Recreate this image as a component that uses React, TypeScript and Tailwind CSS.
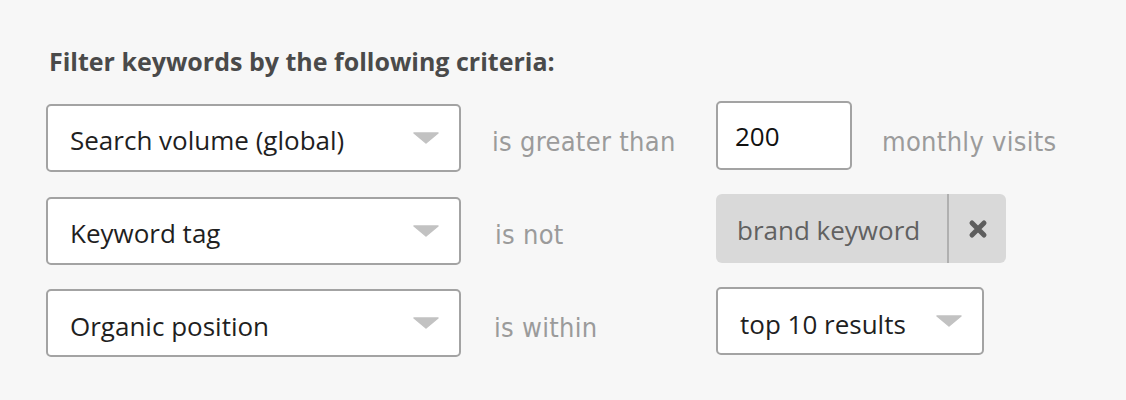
import React from "react";

const sans = { fontFamily: "'Open Sans', Lato, sans-serif" };
const narrow = { fontFamily: "'Liberation Sans Narrow', 'DejaVu Sans Condensed', sans-serif" };

function Caret() {
  return (
    <svg width="26" height="12" viewBox="0 0 26 12" className="shrink-0">
      <path d="M1 1 H25 L13 11 Z" fill="#c2c2c2" stroke="#c2c2c2" strokeLinejoin="round" strokeWidth="1.5" />
    </svg>
  );
}

function Select({ label, w }: { label: string; w: string }) {
  return (
    <div className={`${w} h-[68px] flex items-center justify-between bg-white border-2 border-[#a3a3a3] rounded-[5px] pl-[22px] pr-[20px]`}>
      <span className="text-[26px] text-[#1f1f1f] pt-[6px]" style={sans}>{label}</span>
      <Caret />
    </div>
  );
}

function Label({ text }: { text: string }) {
  return <span className="text-[27px] text-[#9b9b9b] tracking-[0.3px] pt-[10px] inline-block" style={narrow}>{text}</span>;
}

export default function App() {
  return (
    <div className="w-[1126px] h-[400px] bg-[#f7f7f7] pl-[46px] pt-[46px]">
      <h2 className="text-[25px] leading-[30px] font-bold text-[#4a4a4a] pl-[3px] mb-[25px]" style={sans}>
        Filter keywords by the following criteria:
      </h2>

      <div className="grid grid-cols-[415px_255px_auto] gap-y-[20px] items-center">
        {/* row 1 */}
        <Select label="Search volume (global)" w="w-[415px]" />
        <div className="pl-[31px]"><Label text="is greater than" /></div>
        <div className="flex items-center gap-[30px] mb-[4px]">
          <div className="w-[136px] h-[69px] bg-white border-2 border-[#a3a3a3] rounded-[5px] flex items-center pl-[17px]">
            <span className="text-[26px] text-[#111] pt-[2px]" style={sans}>200</span>
          </div>
          <div className="mt-[4px]"><Label text="monthly visits" /></div>
        </div>

        {/* row 2 */}
        <Select label="Keyword tag" w="w-[415px]" />
        <div className="pl-[34px]"><Label text="is not" /></div>
        <div className="mb-[4px]">
          <div className="w-[290px] h-[69px] bg-[#d9d9d9] rounded-[6px] flex items-stretch">
            <div className="flex-1 flex items-center pl-[21px] border-r-2 border-[#b0b0b0]">
              <span className="text-[26px] text-[#616161] pt-[4px]" style={sans}>brand keyword</span>
            </div>
            <div className="w-[57px] flex items-center justify-center">
              <svg width="20" height="20" viewBox="0 0 20 20">
                <path d="M4 4 L16 16 M16 4 L4 16" stroke="#5e5e5e" strokeWidth="5" strokeLinecap="round" />
              </svg>
            </div>
          </div>
        </div>

        {/* row 3 */}
        <Select label="Organic position" w="w-[415px]" />
        <div className="pl-[33px]"><Label text="is within" /></div>
        <div className="mb-[4px]">
          <Select label="top 10 results" w="w-[268px]" />
        </div>
      </div>
    </div>
  );
}
